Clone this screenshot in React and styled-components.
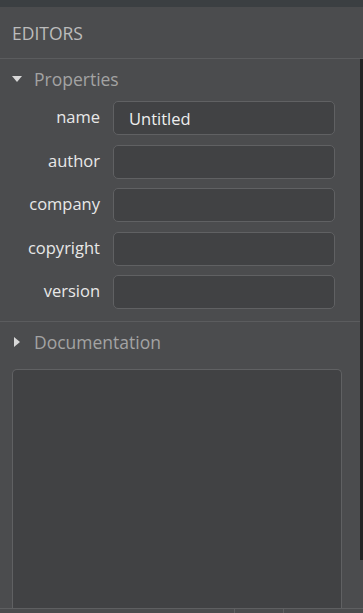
import React from 'react'
import styled, { createGlobalStyle } from 'styled-components'

const GlobalStyle = createGlobalStyle`
    html, body {
        margin: 0;
        padding: 0;
        background: #4b4c4e;
    }
    * {
        box-sizing: border-box;
    }
`

const fields = [
    { label: 'name', value: 'Untitled' },
    { label: 'author', value: '' },
    { label: 'company', value: '' },
    { label: 'copyright', value: '' },
    { label: 'version', value: '' },
]

function Caret({ open }) {
    return (
        <CaretIcon viewBox="0 0 10 10" width="10" height="10">
            {open ? <path d="M0 2 L10 2 L5 8 Z" /> : <path d="M2 0 L8 5 L2 10 Z" />}
        </CaretIcon>
    )
}

function App() {
    return (
        <>
            <GlobalStyle />
            <PanelStyled>
                <div className="top-strip" />
                <div className="panel-title">EDITORS</div>
                <div className="body">
                    <div className="scroll-area">
                        <Section>
                            <SectionHeader>
                                <Caret open />
                                <span>Properties</span>
                            </SectionHeader>
                            <FieldGrid>
                                {fields.map((f) => (
                                    <React.Fragment key={f.label}>
                                        <FieldLabel>{f.label}</FieldLabel>
                                        <FieldInput defaultValue={f.value} />
                                    </React.Fragment>
                                ))}
                            </FieldGrid>
                        </Section>
                        <Section $last>
                            <SectionHeader>
                                <Caret />
                                <span>Documentation</span>
                            </SectionHeader>
                            <DocBox />
                        </Section>
                    </div>
                    <Scrollbar />
                </div>
                <StatusBar>
                    <StatusCell $width="235px" />
                    <StatusCell $width="49px" />
                    <StatusCell $width="79px" $noBorder />
                </StatusBar>
            </PanelStyled>
        </>
    )
}

const PanelStyled = styled.div`
    width: 363px;
    height: 613px;
    display: flex;
    flex-direction: column;
    background: #4b4c4e;
    font-family: "Open Sans", "Noto Sans", sans-serif;
    overflow: hidden;

    .top-strip {
        height: 7px;
        background: #3b3f42;
        flex-shrink: 0;
    }

    .panel-title {
        height: 52px;
        flex-shrink: 0;
        display: flex;
        align-items: center;
        padding-left: 12px;
        font-size: 17.5px;
        color: #bcbcbc;
        border-bottom: 1px solid #5b5c5e;
    }

    .body {
        flex: 1;
        display: flex;
        min-height: 0;
    }

    .scroll-area {
        flex: 1;
        display: flex;
        flex-direction: column;
    }
`

const Scrollbar = styled.div`
    width: 3px;
    background: #232425;
    margin-bottom: 48px;
`

const Section = styled.div`
    display: flex;
    flex-direction: column;
    border-bottom: ${(p) => (p.$last ? 'none' : '1px solid #5b5c5e')};
    flex: ${(p) => (p.$last ? 1 : 'none')};
    padding-bottom: ${(p) => (p.$last ? '0' : '12px')};
`

const SectionHeader = styled.div`
    height: 39px;
    display: flex;
    align-items: center;
    padding-left: 12px;
    gap: 12px;
    font-size: 17.5px;
    color: #a3a3a3;
`

const CaretIcon = styled.svg`
    fill: #d8d8d8;
    flex-shrink: 0;
`

const FieldGrid = styled.div`
    display: grid;
    grid-template-columns: 100px 1fr;
    column-gap: 13px;
    row-gap: 9.5px;
    margin-top: 3px;
    padding-right: 25px;
    align-items: center;
`

const FieldLabel = styled.div`
    text-align: right;
    font-size: 16.5px;
    font-weight: 500;
    color: #e8e8e8;
    padding-bottom: 3px;
`

const FieldInput = styled.input`
    height: 34px;
    width: 100%;
    background: #414244;
    border: 1px solid #606163;
    border-radius: 5px;
    color: #eeeeee;
    font-family: inherit;
    font-size: 16.5px;
    padding: 0 15px;
    outline: none;
`

const DocBox = styled.div`
    flex: 1;
    margin: 8px 18px 0 12px;
    background: #414244;
    border: 1px solid #606163;
    border-bottom: none;
    border-radius: 5px 5px 0 0;
`

const StatusBar = styled.div`
    height: 5px;
    flex-shrink: 0;
    display: flex;
    border-top: 1px solid #5e5f61;
    background: #4b4c4e;
`

const StatusCell = styled.div`
    width: ${(p) => p.$width};
    border-right: ${(p) => (p.$noBorder ? 'none' : '1px solid #5e5f61')};
`

export default App
